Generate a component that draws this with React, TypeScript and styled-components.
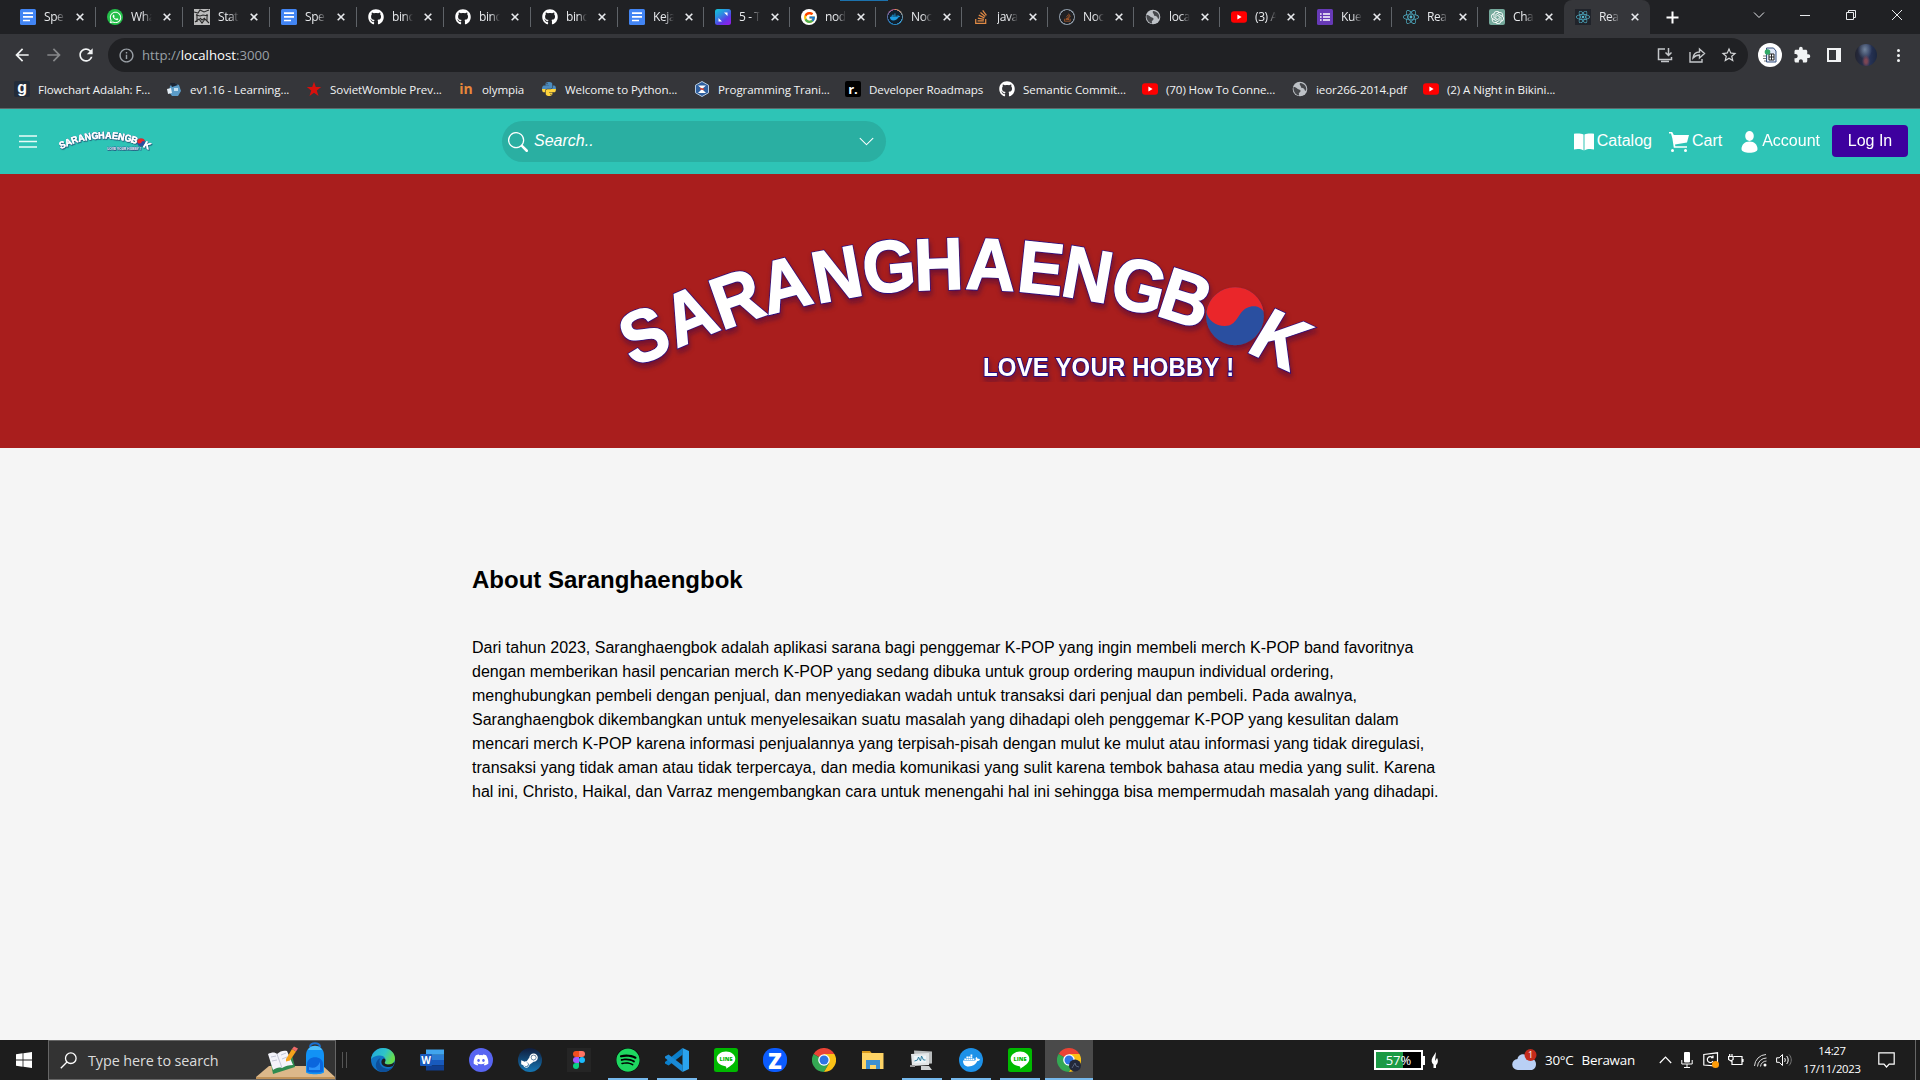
import React from "react";
import styled, { createGlobalStyle } from "styled-components";
import {
  FaGithub,
  FaWhatsapp,
  FaDocker,
  FaStackOverflow,
  FaReact,
  FaPython,
  FaDiscord,
  FaSteamSymbol,
  FaSpotify,
} from "react-icons/fa6";
import { FcGoogle } from "react-icons/fc";
import { SiOpenai } from "react-icons/si";
import { BsSearch, BsChevronDown } from "react-icons/bs";
import { MdExtension, MdStarOutline, MdArrowBack, MdArrowForward, MdRefresh, MdInfoOutline } from "react-icons/md";

const UI_FONT = '"Open Sans", "Noto Sans", sans-serif';
const PAGE_FONT = '"Liberation Sans", Arial, sans-serif';

const GlobalStyle = createGlobalStyle`
  * { box-sizing: border-box; }
  body { margin: 0; background: #f5f5f5; overflow: hidden; }
  button { font: inherit; border: 0; }
`;

const Screen = styled.div`
  width: 1920px;
  height: 1080px;
  display: flex;
  flex-direction: column;
  overflow: hidden;
  font-family: ${UI_FONT};
`;

/* ---------- browser chrome ---------- */

const TabStrip = styled.div`
  position: relative;
  flex: none;
  height: 34px;
  padding-left: 9px;
  display: flex;
  background: #202124;
  color: #e8eaed;
`;

const LoadAccent = styled.div`
  position: absolute;
  left: 840px;
  top: 0;
  width: 48px;
  height: 1px;
  background: #1c72ad;
`;

const Tab = styled.div<{ $w: number; $active?: boolean; $last?: boolean }>`
  width: ${(p) => p.$w}px;
  height: 34px;
  flex: none;
  display: flex;
  align-items: center;
  padding-left: 11px;
  background: ${(p) => (p.$active ? "#35363a" : "transparent")};
  border-radius: 8px 8px 0 0;
  font-size: 12px;
  &::after {
    content: "";
    width: 1px;
    height: 20px;
    margin-left: auto;
    background: ${(p) => (p.$active || p.$last ? "transparent" : "#5f6368")};
  }
`;

const TabTitle = styled.span`
  width: 21px;
  margin-left: 8px;
  line-height: 16px;
  white-space: nowrap;
  letter-spacing: -0.4px;
  mask-image: linear-gradient(90deg, #000 55%, transparent 100%);
`;

const TabClose = styled.svg`
  width: 8px;
  height: 8px;
  margin-left: 11px;
  stroke: #e8eaed;
  stroke-width: 1.6;
`;

const NewTab = styled.div`
  display: flex;
  align-items: center;
  padding-left: 16px;
`;

const WindowControls = styled.div`
  display: flex;
  margin-left: auto;
  height: 29px;
  align-items: center;
  svg {
    width: 46px;
    height: 12px;
    fill: none;
    stroke: #e8eaed;
  }
`;

const Toolbar = styled.div`
  flex: none;
  height: 38px;
  padding: 4px 11px 0 12px;
  display: flex;
  align-items: center;
  background: #35363a;
`;

const NavIcon = styled.div<{ $dim?: boolean }>`
  width: 32px;
  display: flex;
  color: ${(p) => (p.$dim ? "#86888a" : "#f1f3f4")};
  font-size: 20px;
`;

const Omnibox = styled.div`
  width: 1640px;
  height: 34px;
  flex: none;
  padding: 0 10px;
  display: flex;
  align-items: center;
  border-radius: 17px;
  background: #202124;
  color: #9aa0a6;
`;

const Url = styled.span`
  margin-left: 7px;
  font-size: 13.2px;
  b {
    font-weight: 400;
    color: #fff;
  }
`;

const OmniActions = styled.div`
  display: flex;
  align-items: center;
  gap: 14px;
  margin-left: auto;
  svg {
    display: block;
    width: 18px;
    height: 18px;
  }
`;

const ToolbarRight = styled.div`
  display: flex;
  align-items: center;
  margin-left: 10px;
  color: #f1f3f4;
`;

const ExtensionBadge = styled.div`
  width: 24px;
  height: 24px;
  border-radius: 50%;
  background: #fff;
  display: grid;
  place-items: center;
`;

const Puzzle = styled(MdExtension)`
  width: 18px;
  height: 18px;
  margin-left: 10.5px;
`;

const SidePanel = styled.div`
  width: 14px;
  height: 14px;
  margin-left: 16px;
  border: 2px solid #f1f3f4;
  border-right-width: 5px;
`;

const Avatar = styled.div`
  width: 22px;
  height: 22px;
  margin-left: 14px;
  border-radius: 50%;
  background:
    radial-gradient(ellipse at 50% 78%, #7d4654 0 8%, transparent 26%),
    radial-gradient(ellipse at 45% 25%, #71839c 0, transparent 42%),
    linear-gradient(90deg, #232430, #29365c 60%, #1c2740);
`;

const Dots = styled.div`
  display: grid;
  gap: 2px;
  margin-left: 20px;
  i {
    width: 3px;
    height: 3px;
    border-radius: 50%;
    background: #f1f3f4;
  }
`;

const BookmarkBar = styled.div`
  flex: none;
  height: 37px;
  padding: 0 0 2px 14px;
  display: flex;
  align-items: center;
  background: #35363a;
  border-bottom: 1px solid #5d6a6b;
  color: #f1f3f4;
  font-size: 11.6px;
`;

const Bookmark = styled.div<{ $w: number; $ls?: number }>`
  width: ${(p) => p.$w}px;
  flex: none;
  display: flex;
  align-items: center;
  gap: 8px;
  white-space: nowrap;
  letter-spacing: ${(p) => p.$ls ?? -0.1}px;
`;

const Favicon = styled.span<{ $bg?: string; $c?: string; $r?: number; $s?: number }>`
  width: 16px;
  height: 16px;
  flex: none;
  display: grid;
  place-items: center;
  border-radius: ${(p) => p.$r ?? 0}px;
  background: ${(p) => p.$bg ?? "transparent"};
  color: ${(p) => p.$c ?? "#fff"};
  font-size: ${(p) => p.$s ?? 16}px;
  font-weight: 700;
  line-height: 1;
`;

/* ---------- site ---------- */

const SiteHeader = styled.header`
  flex: none;
  height: 65px;
  display: flex;
  align-items: center;
  padding: 0 12px 0 19px;
  background: #2ec4b6;
  color: #fff;
  font: 16px ${PAGE_FONT};
`;

const MenuButton = styled.svg`
  width: 18px;
  height: 13px;
  stroke: #e9fbf8;
  stroke-width: 1.3;
`;

const SmallLogo = styled.div`
  width: 96px;
  height: 20px;
  margin: 0 0 2px 20px;
`;

const SearchBar = styled.div`
  width: 384px;
  height: 41px;
  margin-left: 349px;
  padding: 0 11px 0 6px;
  display: flex;
  align-items: center;
  border-radius: 21px;
  background: #2aafa2;
  font-style: italic;
  svg {
    font-size: 20px;
  }
  span {
    margin-left: 6px;
    padding-bottom: 2px;
  }
  svg:last-child {
    font-size: 17px;
    margin-left: auto;
  }
`;

const NavLinks = styled.nav`
  display: flex;
  align-items: center;
  margin-left: auto;
  padding-bottom: 2px;
`;

const NavLink = styled.a<{ $gap: number }>`
  display: flex;
  align-items: center;
  gap: 3px;
  margin-right: ${(p) => p.$gap}px;
  svg {
    display: block;
    margin-top: 2px;
    fill: #fff;
  }
`;

const LoginButton = styled.button`
  width: 76px;
  height: 32px;
  padding: 0;
  border-radius: 4px;
  background: #3d009e;
  color: #fff;
`;

const Hero = styled.section`
  flex: none;
  height: 274px;
  padding-top: 58px;
  display: flex;
  justify-content: center;
  align-items: flex-start;
  background: #a91e1d;
`;

const HeroLogo = styled.div`
  width: 710px;
  height: 150px;
  margin-left: 10px;
`;

const About = styled.main`
  flex: 1;
  padding: 118px 0 0 472px;
  background: #f5f5f5;
  color: #000;
  font-family: ${PAGE_FONT};
`;

const AboutTitle = styled.h2`
  margin: 0 0 42px;
  font-size: 24px;
  line-height: 28px;
`;

const AboutText = styled.p`
  margin: 0;
  font-size: 16px;
  line-height: 24px;
  white-space: pre;
`;

/* ---------- taskbar ---------- */

const Taskbar = styled.footer`
  flex: none;
  height: 40px;
  display: flex;
  background: #1d1d1d;
  color: #fff;
`;

const StartButton = styled.div`
  width: 48px;
  display: grid;
  place-items: center;
`;

const TaskSearch = styled.div`
  width: 288px;
  padding-left: 11px;
  display: flex;
  align-items: center;
  background: #333;
  border: 1px solid #666;
  color: #dcdcdc;
  font-size: 14.4px;
  span {
    margin-left: 11px;
    letter-spacing: -0.1px;
  }
  svg:last-child {
    margin-left: auto;
  }
`;

const Grip = styled.div`
  width: 22px;
  padding-left: 6px;
  display: flex;
  align-items: center;
  gap: 3px;
  &::before,
  &::after {
    content: "";
    width: 1px;
    height: 16px;
    background: #555;
  }
`;

const TaskItem = styled.div<{ $open?: boolean; $active?: boolean }>`
  width: 49.07px;
  display: grid;
  place-items: center;
  align-content: center;
  background: linear-gradient(${(p) => (p.$open ? "#76b9ed, #76b9ed" : "transparent, transparent")}) center bottom /
      ${(p) => (p.$active ? "48px" : "40px")} 2px no-repeat,
    linear-gradient(${(p) => (p.$active ? "#4a4a4a, #4a4a4a" : "transparent, transparent")}) center / 48px 100%
      no-repeat;
  svg {
    display: block;
  }
`;

const Chip = styled.span<{ $bg: string; $c?: string; $r: number; $s: number }>`
  width: 24px;
  height: 24px;
  display: grid;
  place-items: center;
  border-radius: ${(p) => p.$r}px;
  background: ${(p) => p.$bg};
  color: ${(p) => p.$c ?? "#fff"};
  font-size: ${(p) => p.$s}px;
  font-weight: 800;
  line-height: 1;
`;

const Tray = styled.div`
  margin-left: auto;
  display: flex;
  align-items: center;
  font-size: 14px;
  svg {
    display: block;
    flex: none;
  }
`;

const Battery = styled.div`
  width: 49px;
  height: 20px;
  display: grid;
  place-items: center;
  border: 2px solid #fff;
  background: linear-gradient(90deg, #1c9a45 59%, #000 59%);
  font-size: 13px;
  line-height: 16px;
`;

const BatteryKnob = styled.div`
  width: 2px;
  height: 9px;
  margin-right: 6px;
  background: #fff;
`;

const Weather = styled.div`
  width: 147px;
  margin-left: 73px;
  display: flex;
  align-items: center;
  font-size: 13.4px;
  white-space: nowrap;
  letter-spacing: -0.25px;
  span {
    margin-left: 8px;
  }
`;

const TrayIcons = styled.div`
  width: 134px;
  display: flex;
  align-items: center;
  justify-content: space-between;
`;

const Clock = styled.div`
  width: 78px;
  text-align: center;
  font-size: 11.3px;
  line-height: 18px;
  letter-spacing: -0.25px;
`;

const Notify = styled.div`
  width: 45px;
  height: 40px;
  display: flex;
  align-items: center;
  padding-left: 7px;
  border-right: 1px solid #666;
  margin-right: 4px;
`;

/* ---------- drawings ---------- */

type Glyph = { ch: string; x: number; y: number; r: number; k?: number };

const arc: Glyph[] = [
  { ch: "S", x: 653.5, y: 358.5, r: -22 },
  { ch: "A", x: 699.3, y: 338.5, r: -23 },
  { ch: "R", x: 745, y: 322, r: -19.5 },
  { ch: "A", x: 791.5, y: 308.5, r: -14.5 },
  { ch: "N", x: 841.3, y: 299, r: -10.5 },
  { ch: "G", x: 891, y: 291.5, r: -5 },
  { ch: "H", x: 939.5, y: 289.5, r: -2 },
  { ch: "A", x: 989.7, y: 289.5, r: 2.5 },
  { ch: "E", x: 1038.5, y: 293, r: 6 },
  { ch: "N", x: 1083.3, y: 299.3, r: 10 },
  { ch: "G", x: 1133, y: 310.2, r: 14 },
  { ch: "B", x: 1178, y: 322, r: 18 },
  { ch: "K", x: 1267.5, y: 361, r: 25, k: -6 },
];

function Logo({ small }: { small?: boolean }) {
  return (
    <svg width="100%" height="100%" viewBox="610 232 710 150">
      <defs>
        <filter id={small ? "shade-s" : "shade-l"} x="-10%" y="-20%" width="120%" height="150%">
          <feDropShadow
            dx={small ? 5 : 1}
            dy={small ? 8 : 4}
            stdDeviation={small ? 2 : 2.6}
            floodColor="#1a0a50"
            floodOpacity={small ? 0.5 : 0.4}
          />
        </filter>
      </defs>
      <g
        filter={`url(#${small ? "shade-s" : "shade-l"})`}
        fontFamily="Liberation Sans, Arial, sans-serif"
        fontWeight="700"
        fill="#fff"
        strokeLinejoin="miter"
        textAnchor="middle"
      >
        <circle cx="1235" cy="316.3" r="28.9" fill="#2b4fa0" />
        <path
          d="M1206.5 312a28.9 28.9 0 0 1 57.2 0c-3-6-11-7-17-4-9 4-9 18-22 18-9 0-17-6-18.200-14z"
          fill="#ea262c"
        />
        {arc.map((g, i) => (
          <g key={i} transform={`translate(${g.x} ${g.y}) rotate(${g.r}) skewX(${g.k ?? 0}) scale(0.93 1)`}>
            <text fontSize="73" stroke="#2b0f80" strokeWidth="3.200" paintOrder="stroke">
              {g.ch}
            </text>
            <text fontSize="73" stroke="#fff" strokeWidth="1.600" aria-hidden="true">
              {g.ch}
            </text>
          </g>
        ))}
        <text
          transform="translate(983 376) scale(0.92 1)"
          fontSize="26"
          textAnchor="start"
          textLength="273"
          stroke="#2b0f80"
          strokeWidth="2"
          paintOrder="stroke"
        >
          LOVE YOUR HOBBY !
        </text>
      </g>
    </svg>
  );
}

const DocIcon = () => (
  <svg width="16" height="16" viewBox="0 0 16 16">
    <rect width="16" height="16" rx="1.500" fill="#4285f4" />
    <path d="M3 4.200h10M3 7.800h10M3 11.500h7" stroke="#fff" strokeWidth="1.700" />
  </svg>
);

const YouTube = () => (
  <svg width="16" height="16" viewBox="0 0 16 16">
    <rect y="2.300" width="16" height="11.500" rx="3" fill="#f00" />
    <path d="M6.400 5.500v5L10.600 8z" fill="#fff" />
  </svg>
);

const Globe = () => (
  <svg width="16" height="16" viewBox="0 0 16 16">
    <circle cx="8" cy="8" r="7.300" fill="#bdc1c6" />
    <path d="M1.500 6c3 0 3.500 2 5.500 2.500s2 2 .5 3 0 2-.5 3C3.500 14 1 10 1.500 6zM8 2c-1 2 1 2.500 1 4s3 .5 3.500 2.500 1 1 1.500 1c1-3-1-7-6-7.500z" fill="#45474b" />
  </svg>
);

const Statue = () => (
  <svg width="16" height="16" viewBox="0 0 16 16">
    <rect width="16" height="16" fill="#bdbdbd" />
    <path d="M0 3l4 1 2-3 4 2 5-2M2 6l4 1 3-1 5 1M1 13l4-3 3 4 3-4 4 4M3 5v8M13 5v7M6 9l2 2 3-2" stroke="#2a2a2a" strokeWidth="1.100" fill="none" />
  </svg>
);

const Canvas = () => (
  <svg width="16" height="16" viewBox="0 0 16 16">
    <defs>
      <linearGradient id="cv" x1="0" y1="0" x2="0.700" y2="1">
        <stop offset="0" stopColor="#12c9d6" />
        <stop offset=".4" stopColor="#2b8fe0" />
        <stop offset=".75" stopColor="#5b3be8" />
        <stop offset="1" stopColor="#8a22e8" />
      </linearGradient>
    </defs>
    <rect width="16" height="16" rx="2.500" fill="url(#cv)" />
    <path d="M9 3.500h3.500V7zM3.500 9v3.500H7z" fill="#fff" />
  </svg>
);

const FormIcon = () => (
  <svg width="16" height="16" viewBox="0 0 16 16">
    <rect width="16" height="16" rx="1.500" fill="#673ab7" />
    <path d="M6 5h7M6 8h7M6 11h7M3 5h1.600M3 8h1.600M3 11h1.600" stroke="#fff" strokeWidth="1.600" />
  </svg>
);

const CloseX = () => (
  <TabClose viewBox="0 0 8 8">
    <path d="M.7.7l6.600 6.600M7.300.7L.7 7.300" />
  </TabClose>
);

const Chrome = ({ badge }: { badge?: boolean }) => (
  <svg width="24" height="24" viewBox="0 0 24 24">
    <path d="M12 12L1.600 6A12 12 0 0 1 22.400 6z" fill="#ea4335" />
    <path d="M12 12L1.600 6A12 12 0 0 0 12 24l5.200-9z" fill="#34a853" />
    <path d="M12 12V6h10.400A12 12 0 0 1 12 24l5.200-9z" fill="#fbc116" />
    <circle cx="12" cy="12" r="5.800" fill="#fff" />
    <circle cx="12" cy="12" r="4.500" fill="#2f74e4" />
    {badge && <circle cx="18" cy="17.500" r="6" fill="#23283a" />}
    {badge && <path d="M15 20l3-5 1 3 3 1" stroke="#56627c" fill="none" />}
  </svg>
);

const LineApp = () => (
  <svg width="24" height="24" viewBox="0 0 24 24">
    <rect width="24" height="24" rx="2.500" fill="#00b900" />
    <path d="M12 3.500c5.300 0 9.300 3.300 9.300 7.300 0 4.200-4.300 6.800-9 10 .3-2-.2-2.600-2-2.800-4.500-.7-7.600-3.600-7.600-7.200 0-4 4-7.300 9.300-7.300z" fill="#fff" />
    <text x="12" y="13" fontSize="5.600" fontWeight="800" fill="#00b900" textAnchor="middle" fontFamily="Open Sans, sans-serif">
      LINE
    </text>
  </svg>
);

const tabs: { icon: React.ReactNode; title: string }[] = [
  { icon: <DocIcon />, title: "Spe" },
  { icon: <Favicon $bg="#25c04b" $r={8} $s={13}><FaWhatsapp /></Favicon>, title: "Wha" },
  { icon: <Statue />, title: "Stat" },
  { icon: <DocIcon />, title: "Spe" },
  { icon: <Favicon><FaGithub /></Favicon>, title: "binc" },
  { icon: <Favicon><FaGithub /></Favicon>, title: "binc" },
  { icon: <Favicon><FaGithub /></Favicon>, title: "binc" },
  { icon: <DocIcon />, title: "Keja" },
  { icon: <Canvas />, title: "5 - T" },
  { icon: <Favicon $bg="#fff" $r={8} $s={13}><FcGoogle /></Favicon>, title: "nod" },
  {
    icon: (
      <Favicon
        $bg="radial-gradient(circle,#10202e 60%,transparent 62%),conic-gradient(#f0935a,#3aa0d8 35%,#1d7fc0 60%,#c95a8a)"
        $c="#1d9be0"
        $r={8}
        $s={10}
      >
        <FaDocker />
      </Favicon>
    ),
    title: "Noc",
  },
  { icon: <Favicon $c="#e08a45"><FaStackOverflow /></Favicon>, title: "java" },
  { icon: <Favicon $bg="radial-gradient(circle,#202124 58%,#8b98a5 62%)" $c="#b8602a" $r={8} $s={9}><FaStackOverflow /></Favicon>, title: "Noc" },
  { icon: <Globe />, title: "loca" },
  { icon: <YouTube />, title: "(3) A" },
  { icon: <FormIcon />, title: "Kue" },
  { icon: <Favicon $c="#53b7cf"><FaReact /></Favicon>, title: "Rea" },
  { icon: <Favicon $bg="#75a99c" $r={2} $s={13}><SiOpenai /></Favicon>, title: "Cha" },
  { icon: <Favicon $bg="#20232a" $c="#53b7cf" $s={14}><FaReact /></Favicon>, title: "Rea" },
];

const bookmarks: { icon: React.ReactNode; label: string; w: number; ls?: number }[] = [
  {
    icon: (
      <svg width="16" height="16" viewBox="0 0 16 16">
        <rect width="16" height="16" rx="2" fill="#232c39" />
        <text x="8" y="12" fontSize="16" fontWeight="700" fill="#fff" textAnchor="middle" fontFamily="Liberation Sans, sans-serif">
          g
        </text>
      </svg>
    ),
    label: "Flowchart Adalah: F...",
    w: 152,
  },
  {
    icon: (
      <svg width="16" height="16" viewBox="0 0 16 16">
        <path d="M4 5l4-3 5 2 2 6-3 5H6L3 11z" fill="#5b9cc8" />
        <path d="M4 2l5 0 3 2-6 2z" fill="#1b2433" />
        <path d="M1 8l4-1 1 5-4 1z" fill="#e4eef5" />
        <path d="M8 7h4v3H8z" fill="#c3e0f2" />
      </svg>
    ),
    label: "ev1.16 - Learning...",
    w: 140,
  },
  {
    icon: (
      <svg width="16" height="16" viewBox="0 0 16 16">
        <path d="M8 .8l1.800 5.300h5.400l-4.400 3.300 1.700 5.600L8 11.700 3.500 15l1.700-5.600L.8 6.100h5.400z" fill="#d8100c" />
      </svg>
    ),
    label: "SovietWomble Prev...",
    w: 152,
  },
  { icon: <Favicon $c="#e8893a" $s={14}>in</Favicon>, label: "olympia", w: 83 },
  { icon: <Favicon $c="#4b8bbe"><FaPython fill="url(#py)" /></Favicon>, label: "Welcome to Python...", w: 153 },
  {
    icon: (
      <svg width="16" height="16" viewBox="0 0 16 16">
        <path d="M8 .5l6.500 3.700v7.600L8 15.500 1.500 11.800V4.200z" fill="#2f5f9e" stroke="#b7cbe0" />
        <path d="M4 4.500h8L8 8zM4 12l4-4 4 4z" fill="#fff" />
        <path d="M6 7.500l4 1" stroke="#d8402f" strokeWidth="1.500" />
      </svg>
    ),
    label: "Programming Trani...",
    w: 151,
  },
  { icon: <Favicon $bg="#000" $r={2} $s={13}>r.</Favicon>, label: "Developer Roadmaps", w: 154 },
  { icon: <Favicon><FaGithub /></Favicon>, label: "Semantic Commit...", w: 143 },
  { icon: <YouTube />, label: "(70) How To Conne...", w: 150 },
  { icon: <Globe />, label: "ieor266-2014.pdf", w: 131 },
  { icon: <YouTube />, label: "(2) A Night in Bikini...", w: 140 },
];

const tasks: { icon: React.ReactNode; open?: boolean; active?: boolean }[] = [
  {
    icon: (
      <svg width="24" height="24" viewBox="0 0 24 24">
        <defs>
          <linearGradient id="edge" x1="0" y1="0" x2="1" y2="0.400">
            <stop offset="0" stopColor="#1fa6e0" />
            <stop offset=".6" stopColor="#2fc4c8" />
            <stop offset="1" stopColor="#66dd4d" />
          </linearGradient>
        </defs>
        <circle cx="12" cy="12" r="12" fill="#1173c4" />
        <path d="M0 11.500C.8 4.500 6 0 12 0c7 0 12 5 12 10.500 0 4-3 6-6.500 6-3 0-4.500-1.200-3.500-2.500 2-3-1-6.500-5-6.500-4.500 0-8 2-9 4z" fill="url(#edge)" />
        <path d="M8.500 12.500c-.5 5 4 8.500 9 8.200 2-.1 4.200-1.400 5-2.700-2 3.500-6 6-10.500 6-5 0-8-4-7-8.500.6-2.500 2-4.500 4.500-5.500-.5.600-.9 1.500-1 2.500z" fill="#0d4f9a" />
        <path d="M14 14c-1 1.300.5 2.500 3.500 2.500 2.500 0 4.800-1 5.800-2.800.2 1.500-.6 3.300-1.800 4.500-3 1.500-10 1.300-11-3.200-.4-2 .5-4 2-4.500 1.800 0 2.500 1.800 1.500 3.500z" fill="#1d1d1d" />
      </svg>
    ),
  },
  {
    icon: (
      <svg width="24" height="24" viewBox="0 0 24 24">
        <path d="M6 1.500h18v5.300H6z" fill="#41a5ee" />
        <path d="M6 6.800h18v5.200H6z" fill="#2b7cd3" />
        <path d="M6 12h18v5.200H6z" fill="#185abd" />
        <path d="M6 17.200h18v5.300H6z" fill="#103f91" />
        <rect y="6" width="12" height="12" rx="1" fill="#185abd" />
        <text x="6" y="15.500" fontSize="10" fontWeight="700" fill="#fff" textAnchor="middle" fontFamily="Open Sans, sans-serif">
          W
        </text>
      </svg>
    ),
  },
  { icon: <Chip $bg="#5865f2" $r={12} $s={16}><FaDiscord /></Chip> },
  { icon: <Chip $bg="linear-gradient(#101c3c,#1477b5)" $r={12} $s={19}><FaSteamSymbol /></Chip> },
  {
    icon: (
      <svg width="24" height="24" viewBox="0 0 24 24">
        <rect width="24" height="24" fill="#252525" />
        <path d="M12 3H9a3 3 0 0 0 0 6h3z" fill="#f24e1e" />
        <path d="M12 3h3a3 3 0 0 1 0 6h-3z" fill="#ff7262" />
        <path d="M12 9H9a3 3 0 0 0 0 6h3z" fill="#a259ff" />
        <circle cx="15" cy="12" r="3" fill="#1abcfe" />
        <path d="M12 15H9a3 3 0 1 0 3 3z" fill="#0acf83" />
      </svg>
    ),
  },
  { icon: <Chip $bg="#000" $c="#1ed760" $r={12} $s={24}><FaSpotify /></Chip>, open: true },
  {
    icon: (
      <svg width="24" height="24" viewBox="0 0 24 24">
        <path d="M17.500 0v6.800L3.600 17.600 0 15.600v-1.500z" fill="#0b7fcb" />
        <path d="M17.500 24v-6.800L3.600 6.400 0 8.400v1.500z" fill="#1a8ad6" />
        <path d="M17.500 0L24 3v18l-6.500 3z" fill="#2aa3ee" />
      </svg>
    ),
    open: true,
  },
  { icon: <LineApp /> },
  { icon: <Chip $bg="#0b5cff" $r={11} $s={22}>Z</Chip> },
  { icon: <Chrome /> },
  {
    icon: (
      <svg width="24" height="24" viewBox="0 0 24 24">
        <path d="M1 3h8l2 2.500H1z" fill="#d99a1c" />
        <path d="M1 5h21.500v16H1z" fill="#fdd365" />
        <path d="M5 12h14v9h-4v-4H9v4H5z" fill="#3d8fd0" />
      </svg>
    ),
  },
  {
    icon: (
      <svg width="24" height="24" viewBox="0 0 24 24">
        <path d="M4 2.500l18 1v12l-17 1z" fill="#b9bcbd" />
        <path d="M1 6l18-1v12L2 18z" fill="#e3e6e7" />
        <path d="M4 8l12-.6v7L4.500 15z" fill="#eef6f9" />
        <path d="M4.500 13l3-1 1-3 2 4 1-5 2 4 2 0" stroke="#2c7c9e" fill="none" />
        <path d="M11 18h8l3 4H11z" fill="#cfd2d3" />
        <path d="M0 17h5v2H0z" fill="#999" />
      </svg>
    ),
    open: true,
  },
  { icon: <Chip $bg="#1d91e8" $r={12} $s={17}><FaDocker /></Chip>, open: true },
  { icon: <LineApp />, open: true },
  { icon: <Chrome badge />, open: true, active: true },
];

const paragraph = [
  "Dari tahun 2023, Saranghaengbok adalah aplikasi sarana bagi penggemar K-POP yang ingin membeli merch K-POP band favoritnya",
  "dengan memberikan hasil pencarian merch K-POP yang sedang dibuka untuk group ordering maupun individual ordering,",
  "menghubungkan pembeli dengan penjual, dan menyediakan wadah untuk transaksi dari penjual dan pembeli. Pada awalnya,",
  "Saranghaengbok dikembangkan untuk menyelesaikan suatu masalah yang dihadapi oleh penggemar K-POP yang kesulitan dalam",
  "mencari merch K-POP karena informasi penjualannya yang terpisah-pisah dengan mulut ke mulut atau informasi yang tidak diregulasi,",
  "transaksi yang tidak aman atau tidak terpercaya, dan media komunikasi yang sulit karena tembok bahasa atau media yang sulit. Karena",
  "hal ini, Christo, Haikal, dan Varraz mengembangkan cara untuk menengahi hal ini sehingga bisa mempermudah masalah yang dihadapi.",
];

function BrowserChrome() {
  return (
    <>
      <TabStrip>
        <LoadAccent />
        {tabs.map((t, i) => (
          <Tab key={i} $w={i < 7 ? 87 : 86} $active={i === tabs.length - 1} $last={i === tabs.length - 2}>
            {t.icon}
            <TabTitle>{t.title}</TabTitle>
            <CloseX />
          </Tab>
        ))}
        <NewTab>
          <svg width="13" height="13" viewBox="0 0 13 13">
            <path d="M6.500 .5v12M.5 6.500h12" stroke="#fff" strokeWidth="2" />
          </svg>
        </NewTab>
        <WindowControls>
          <svg viewBox="0 0 46 12"><path d="M18 3.500l5 5 5-5" /></svg>
          <svg viewBox="0 0 46 12"><path d="M18 6.500h10" /></svg>
          <svg viewBox="0 0 46 12"><path d="M18.500 3.500h7v7h-7zM20.500 3.500v-2h7v7h-2" /></svg>
          <svg viewBox="0 0 46 12"><path d="M18 1l10 10M28 1L18 11" /></svg>
        </WindowControls>
      </TabStrip>
      <Toolbar>
        <NavIcon><MdArrowBack /></NavIcon>
        <NavIcon $dim><MdArrowForward /></NavIcon>
        <NavIcon><MdRefresh /></NavIcon>
        <Omnibox>
          <MdInfoOutline size={17} />
          <Url>
            http://<b>localhost</b>:3000
          </Url>
          <OmniActions>
            <svg viewBox="0 0 18 18" fill="none" stroke="#c4c7ca" strokeWidth="1.500">
              <path d="M9 3H2.500v10.500h13V11M12.500 2v7M9.500 6.500l3 3 3-3M5 15.500h8" />
            </svg>
            <svg viewBox="0 0 18 18" fill="none" stroke="#c4c7ca" strokeWidth="1.400">
              <path d="M2 6v10h12v-3M5 12c.5-4 3-6 6.500-6V3L16.500 7.500 11.500 12V9C9 9 7 9.800 5 12z" />
            </svg>
            <MdStarOutline color="#d5d7d9" />
          </OmniActions>
        </Omnibox>
        <ToolbarRight>
          <ExtensionBadge>
            <svg width="14" height="16" viewBox="0 0 14 16">
              <path d="M3.500 1h7l2.500 3v11h-9.500z" fill="#dfe6f5" stroke="#34507e" />
              <path d="M6 7h5v6H6zM6 10h5M8.500 7v6" fill="#fff" stroke="#222" />
              <circle cx="4.500" cy="5" r="2.800" fill="#32a866" />
              <path d="M0 9h3M0 11.500h3M1 14h2" stroke="#777" />
            </svg>
          </ExtensionBadge>
          <Puzzle />
          <SidePanel />
          <Avatar />
          <Dots>
            <i />
            <i />
            <i />
          </Dots>
        </ToolbarRight>
      </Toolbar>
      <BookmarkBar>
        <svg width="0" height="0">
          <linearGradient id="py" x1="0" y1="0" x2="0" y2="1">
            <stop offset=".5" stopColor="#4b8bbe" />
            <stop offset=".5" stopColor="#ffd43b" />
          </linearGradient>
        </svg>
        {bookmarks.map((b) => (
          <Bookmark key={b.label} $w={b.w} $ls={b.ls}>
            {b.icon}
            {b.label}
          </Bookmark>
        ))}
      </BookmarkBar>
    </>
  );
}

export default function App() {
  return (
    <Screen>
      <GlobalStyle />
      <BrowserChrome />
      <SiteHeader>
        <MenuButton viewBox="0 0 18 13">
          <path d="M0 1h18M0 6.500h18M0 12h18" />
        </MenuButton>
        <SmallLogo>
          <Logo small />
        </SmallLogo>
        <SearchBar>
          <BsSearch />
          <span>Search..</span>
          <BsChevronDown />
        </SearchBar>
        <NavLinks>
          <NavLink $gap={17}>
            <svg width="20" height="18" viewBox="0 0 20 18">
              <path d="M9.500 1.500C7 .2 3 .2 0 .8V16.500c3-.8 7-.8 9.500 1zM10.500 1.500c2.500-1.300 6.500-1.300 9.500-.7V16.500c-3-.8-7-.8-9.500 1z" />
            </svg>
            Catalog
          </NavLink>
          <NavLink $gap={19}>
            <svg width="20" height="20" viewBox="0 0 20 20">
              <path d="M0 0h3.200l1.600 3H20l-2 7.600L6 12.500l.3 1.800H18v1.500H4.800L3.400 6.500 2 1.500H0z" />
              <circle cx="3.500" cy="18.500" r="1.500" />
              <circle cx="16.500" cy="18.500" r="1.500" />
            </svg>
            Cart
          </NavLink>
          <NavLink $gap={12}>
            <svg width="17" height="22" viewBox="0 0 17 22">
              <ellipse cx="8.500" cy="5" rx="4.300" ry="5" />
              <path d="M8.500 10.500c5 0 8 3.500 8 7.500 0 2.500-3.500 3.800-8 3.800S.5 20.500.5 18c0-4 3-7.500 8-7.500z" />
            </svg>
            <span style={{ marginLeft: 1 }}>Account</span>
          </NavLink>
          <LoginButton>Log In</LoginButton>
        </NavLinks>
      </SiteHeader>
      <Hero>
        <HeroLogo>
          <Logo />
        </HeroLogo>
      </Hero>
      <About>
        <AboutTitle>About Saranghaengbok</AboutTitle>
        <AboutText>{paragraph.join("\n")}</AboutText>
      </About>
      <Taskbar>
        <StartButton>
          <svg width="16" height="16" viewBox="0 0 16 16" fill="#fff">
            <path d="M0 2.200L6.600 1.300V7.600H0zM7.400 1.200L16 0v7.600H7.400zM0 8.400h6.600v6.300L0 13.800zM7.400 8.400H16V16l-8.600-1.200z" />
          </svg>
        </StartButton>
        <TaskSearch>
          <svg width="17" height="17" viewBox="0 0 17 17" fill="none" stroke="#fff" strokeWidth="1.300">
            <circle cx="10.800" cy="6.200" r="5.300" />
            <path d="M7 10L.8 16.200" />
          </svg>
          <span>Type here to search</span>
          <svg width="79" height="38" viewBox="0 0 79 38">
            <path d="M13 25h54l12 11v2H0v-2z" fill="#dcb88a" />
            <path d="M0 36h79v2H0z" fill="#c09258" />
            <path d="M14 18l22-4 3 12-22 7z" fill="#2e8b4f" />
            <path d="M12 13c4-2 7-2 9 0 3-3 7-4 10-3l6 14c-4 0-8 1-11 3-3-1-6 0-9 2z" fill="#f4f4fa" />
            <path d="M21 13l5 14M15 16l5-1M16 20l5-1M25 14l5-2M26 18l5-2" stroke="#c3c7d6" />
            <path d="M30 18l6-10 4 2.500-6 9-4 1z" fill="#f5a21b" />
            <path d="M36 8l2-2.500 4 2-2 3z" fill="#f06a6a" />
            <path d="M54 6c0-5 10-5 10 0" fill="none" stroke="#1b6fd0" strokeWidth="2" />
            <path d="M50 14c0-12 18-12 18 0v17c0 3-18 3-18 0z" fill="#1292f5" />
            <path d="M53 7c4-3 8-3 12 0l1 2H52z" fill="#4dbdfb" />
            <path d="M51 23c0-9 16-9 16 0v7c0 2-16 2-16 0z" fill="#0a66dd" />
            <path d="M53 26c5 2 9 0 11-5v8H53z" fill="#2a93fa" />
          </svg>
        </TaskSearch>
        <Grip />
        {tasks.map((t, i) => (
          <TaskItem key={i} $open={t.open} $active={t.active}>
            {t.icon}
          </TaskItem>
        ))}
        <Tray>
          <Battery>57%</Battery>
          <BatteryKnob />
          <svg width="8" height="16" viewBox="0 0 8 16">
            <path d="M5 0L1.500 5.500C0 8 .5 11 2.500 12.500V16h2.500v-3C7 12 7.500 8 6 6L4 9z" fill="#fff" />
          </svg>
          <Weather>
            <svg width="25" height="22" viewBox="0 0 25 22">
              <path d="M6 21a5.500 5.500 0 0 1-.5-11C6 5 14 3 16.500 9c4 0 7.500 2 7.500 6 0 3.500-2 6-5 6z" fill="#b9d0f5" />
              <circle cx="18.500" cy="6" r="6" fill="#c42b1c" />
              <text x="18.500" y="9.300" fontSize="9" fill="#fff" textAnchor="middle" fontFamily="Open Sans, sans-serif">
                1
              </text>
            </svg>
            <span>30°C</span>
            <span>Berawan</span>
          </Weather>
          <TrayIcons>
            <svg width="13" height="8" viewBox="0 0 13 8" fill="none" stroke="#fff" strokeWidth="1.200">
              <path d="M.8 7l5.700-6 5.700 6" />
            </svg>
            <svg width="12" height="16" viewBox="0 0 12 16" fill="none" stroke="#fff">
              <rect x="3" y="0" width="6" height="10.500" rx="1" fill="#fff" stroke="none" />
              <path d="M.8 8v4h10.400V8M6 12v3M3 15.500h6" />
            </svg>
            <svg width="16" height="16" viewBox="0 0 16 16" fill="none" stroke="#fff" strokeWidth="1.200">
              <path d="M.8 2.500L14.500.8V14L.8 13zM9.500 5.500a3 3 0 1 0 .5 3.500M10 3.500v2.200H8" />
              <circle cx="12.500" cy="12.500" r="3.500" fill="#ff9d0a" stroke="none" />
            </svg>
            <svg width="16" height="12" viewBox="0 0 16 12" fill="none" stroke="#fff" strokeWidth="1.200">
              <path d="M6 2.500h8v8H4V7M15 5v3M.6 2.500h4.500v3L3 7 .6 5.500zM1.700 0v2.500M4 0v2.500" />
            </svg>
            <svg width="13" height="13" viewBox="0 0 13 13" fill="none" stroke="#ddd">
              <path d="M.5 12A12 12 0 0 1 12 .5M3.500 12.500A9 9 0 0 1 12.500 4M6.500 12.500a6 6 0 0 1 6-5.500" />
              <circle cx="11" cy="11" r="1.500" fill="#fff" stroke="none" />
            </svg>
            <svg width="17" height="14" viewBox="0 0 17 14" fill="none" stroke="#fff">
              <path d="M.6 4.800h2.600L6.500 1.500v11L3.200 9.300H.6z" />
              <path d="M8.500 5c1 1 1 3 0 4M10.700 3c2 2 2 6 0 8" />
              <path d="M13 1.500c3 3 3 8 0 11" stroke="#777" />
            </svg>
          </TrayIcons>
          <Clock>
            14:27
            <br />
            17/11/2023
          </Clock>
          <Notify>
            <svg width="17" height="16" viewBox="0 0 17 16" fill="none" stroke="#fff" strokeWidth="1.200">
              <path d="M.8.800h15.400v11.400h-5L8.500 15 6 12.200H.8z" />
            </svg>
          </Notify>
        </Tray>
      </Taskbar>
    </Screen>
  );
}
